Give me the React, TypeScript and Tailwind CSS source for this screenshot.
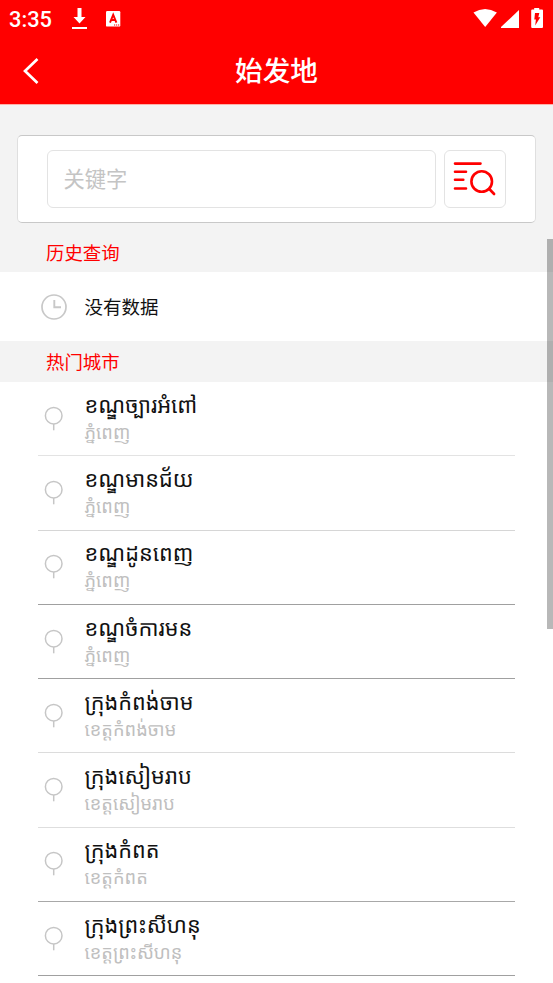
type City = { name: string; province: string; height: string; line: string; lift?: boolean };

const cities: City[] = [
  { name: 'ខណ្ឌច្បារអំពៅ', province: 'ភ្នំពេញ', height: 'h-[74px]', line: 'border-[#e3e3e3]' },
  { name: 'ខណ្ឌមានជ័យ', province: 'ភ្នំពេញ', height: 'h-[75px]', line: 'border-[#d6d6d6]' },
  { name: 'ខណ្ឌដូនពេញ', province: 'ភ្នំពេញ', height: 'h-[74px]', line: 'border-[#a0a0a0]', lift: true },
  { name: 'ខណ្ឌចំការមន', province: 'ភ្នំពេញ', height: 'h-[74px]', line: 'border-[#a0a0a0]' },
  { name: 'ក្រុងកំពង់ចាម', province: 'ខេត្តកំពង់ចាម', height: 'h-[74px]', line: 'border-[#dcdcdc]' },
  { name: 'ក្រុងសៀមរាប', province: 'ខេត្តសៀមរាប', height: 'h-[75px]', line: 'border-[#dedede]' },
  { name: 'ក្រុងកំពត', province: 'ខេត្តកំពត', height: 'h-[74px]', line: 'border-[#a8a8a8]', lift: true },
  { name: 'ក្រុងព្រះសីហនុ', province: 'ខេត្តព្រះសីហនុ', height: 'h-[74px]', line: 'border-[#a0a0a0]' },
];

function StatusBar() {
  return (
    <div className="flex h-[38px] items-center pl-[9px] pr-[10px] text-white">
      <span className="w-[63px] pt-px font-['Roboto','Liberation_Sans',sans-serif] text-[21.800px] font-medium leading-[38px]">3:35</span>
      <svg className="mb-px h-[21px] w-[15px]" viewBox="0 0 15 21" fill="currentColor">
        <path d="M5.500 0h4v9h4L7.500 15.500 1.500 9h4zM0 19h15v2H0z" />
      </svg>
      <svg className="ml-[19px] h-[16px] w-[15px]" viewBox="0 0 15 16">
        <rect width="14.300" height="15.600" rx="1.200" fill="white" />
        <path d="M4 11.700 7.200 3.800 10.400 11.700M5.200 9H9.200" fill="none" stroke="red" strokeWidth="1.900" />
        <path d="M8 13.400h1.200v1.200H8zM10 13.400h1.200v1.200H10zM12 13.400h1.200v1.200H12z" fill="red" />
      </svg>
      <svg className="mb-[2px] ml-auto h-[20px] w-[70px]" viewBox="0 0 70 20" fill="currentColor">
        <path d="M.5 4.500Q12 -2.500 23.900 4.500L12.200 19Z" />
        <path d="M46 2v18H28v-1z" />
        <path d="M61.200 1.500V0h5v1.500H69q1 0 1 1V19q0 1-1 1H59.200q-1 0-1-1V2.500q0-1 1-1z" />
        <path d="M62 5h4.300l-1 4.200h2L62.200 17.500l.7-6H61.300z" fill="red" />
      </svg>
    </div>
  );
}

function SearchIcon() {
  return (
    <svg className="mb-[2px] mr-[2px] h-[36px] w-[43px]" viewBox="0 0 43 36" fill="none" stroke="red" strokeLinecap="round" strokeWidth="2.600">
      <path d="M2 3.600H27.500M2 11.700H13M2 19.800H10.300M2 28.500H13" />
      <circle cx="28.700" cy="21.500" r="10.300" />
      <path d="m36.300 29 4.800 5" />
    </svg>
  );
}

function CityRow({ city }: { city: City }) {
  return (
    <li className={`flex border-b ${city.height} ${city.line}`}>
      <div className={city.lift ? 'flex -mt-px' : 'flex'}>
        <svg className="ml-[6px] mt-[24px] h-[26px] w-[19px] shrink-0" viewBox="0 0 19 26" fill="none" stroke="#c6c6c6" strokeWidth="1.500">
          <circle cx="9.700" cy="9.700" r="8.300" />
          <path d="M9.700 18v6.300" />
        </svg>
        <div className="ml-[21.500px] whitespace-nowrap pt-[7px] font-['Noto_Sans_Khmer','Noto_Sans',sans-serif]">
          <div className="h-[29px] text-[21.700px] leading-[32px] text-[#111]">{city.name}</div>
          <div className="h-[28px] text-[18.300px] leading-[27px] text-[#bfbfbf]">{city.province}</div>
        </div>
      </div>
    </li>
  );
}

export default function App() {
  return (
    <div className="relative flex h-[983px] w-[553px] flex-col overflow-hidden bg-white font-['Noto_Sans_CJK_SC',sans-serif]">
      <header className="h-[105px] border-b border-[#ffb0a8] bg-[#ff0000]">
        <StatusBar />
        <div className="grid h-[65px] grid-cols-[77px_1fr_77px] items-center text-white">
          <svg className="ml-[23px] h-[28px] w-[17px]" viewBox="0 0 17 28" fill="none" stroke="currentColor" strokeWidth="2.700">
            <path d="M14.500 2 2 14l12.500 12" />
          </svg>
          <h1 className="pb-[3px] text-center text-[27.600px] font-medium leading-[40px]">始发地</h1>
        </div>
      </header>
      <section className="h-[167px] bg-[#f3f3f3] px-[17px] pt-[30px]">
        <div className="flex h-[88px] w-[519px] gap-[8px] rounded-[5px] border border-x-[#dfdfdf] border-y-[#c8c8c8] bg-white pl-[29px] pt-[14px]">
          <div className="h-[58px] w-[389px] rounded-[6px] border border-[#e3e3e3] pl-[15.500px] text-[21.300px] leading-[54px] text-[#c4c4c4]">关键字</div>
          <button className="flex h-[58px] w-[62px] items-center justify-center rounded-[6px] border border-[#e3e3e3]" aria-label="关键字">
            <SearchIcon />
          </button>
        </div>
        <h2 className="ml-[29px] mt-[14px] text-[18.400px] leading-[30px] text-[#ff0000]">历史查询</h2>
      </section>
      <section className="flex h-[69px] items-center pl-[41px]">
        <svg className="h-[26px] w-[26px]" viewBox="0 0 26 26" fill="none" stroke="#c8c8c8">
          <circle cx="13" cy="13" r="12" strokeWidth="1.700" />
          <path d="M13.300 6v7.300H20" strokeWidth="1.900" />
        </svg>
        <span className="mb-[2px] ml-[17.500px] text-[18.500px] leading-[30px] text-[#111]">没有数据</span>
      </section>
      <section>
        <h2 className="h-[41px] bg-[#f3f3f3] pl-[46px] text-[18.400px] leading-[41px] text-[#ff0000]">热门城市</h2>
        <ul className="ml-[38px] w-[477px]">
          {cities.map((city) => <CityRow key={city.name} city={city} />)}
        </ul>
      </section>
      <div className="absolute right-0 top-[239px] h-[390px] w-[6px] bg-black/28" />
    </div>
  );
}
